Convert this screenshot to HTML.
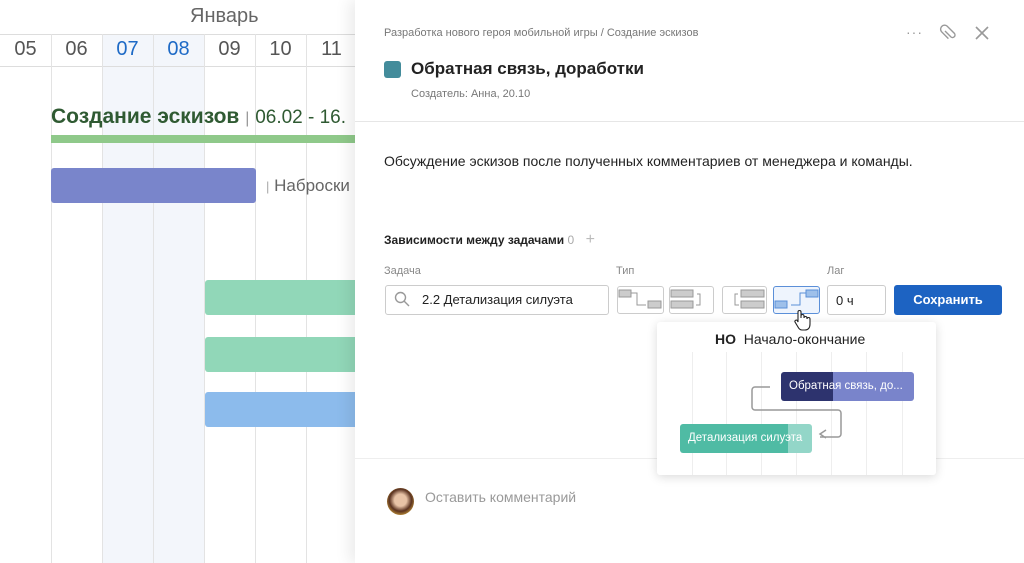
<!DOCTYPE html>
<html><head><meta charset="utf-8"><style>
*{margin:0;padding:0;box-sizing:border-box}
body{width:1024px;height:563px;overflow:hidden;background:#fff;font-family:"Liberation Sans","Noto Sans CJK SC",sans-serif;position:relative}
.a{position:absolute}
.col{position:absolute;top:34px;bottom:0;width:1px;background:#e3e3e3}
.d{position:absolute;top:38px;width:51px;text-align:center;font-size:20px;color:#555}
.tb{position:absolute;top:286px;width:30px;height:28px;border:1px solid #ccc;border-radius:3px;background:#fff}
</style></head><body>
<div class="a" style="left:102px;top:34px;width:102px;height:529px;background:#f3f6fb"></div>
<div class="a" style="left:0;top:34px;width:360px;height:1px;background:#ddd"></div>
<div class="a" style="left:0;top:66px;width:360px;height:1px;background:#ddd"></div>
<div class="col" style="left:51px"></div><div class="col" style="left:102px"></div><div class="col" style="left:153px"></div><div class="col" style="left:204px"></div><div class="col" style="left:255px"></div><div class="col" style="left:306px"></div>
<div class="a" style="left:190px;top:5px;font-size:20px;color:#666">Январь</div>
<div class="d" style="left:0">05</div><div class="d" style="left:51px">06</div><div class="d" style="left:102px;color:#1e6ac6">07</div><div class="d" style="left:153px;color:#1e6ac6">08</div><div class="d" style="left:204px">09</div><div class="d" style="left:255px">10</div><div class="d" style="left:306px">11</div>
<div class="a" style="left:51px;top:105px;font-size:21px;font-weight:bold;color:#2f5a32;white-space:nowrap">Создание эскизов <span style="font-weight:normal;color:#999;font-size:16px">|</span> <span style="font-weight:normal;font-size:19px">06.02 - 16.</span></div>
<div class="a" style="left:51px;top:135px;width:310px;height:8px;background:#8fc98a"></div>
<div class="a" style="left:51px;top:168px;width:205px;height:35px;background:#7985cb;border-radius:3px"></div>
<div class="a" style="left:266px;top:176px;font-size:17px;color:#666;white-space:nowrap"><span style="color:#aaa;font-size:13px">|</span> Наброски</div>
<div class="a" style="left:205px;top:280px;width:160px;height:35px;background:#91d7b8;border-radius:3px"></div>
<div class="a" style="left:205px;top:337px;width:160px;height:35px;background:#91d7b8;border-radius:3px"></div>
<div class="a" style="left:205px;top:392px;width:160px;height:35px;background:#8cbbec;border-radius:3px"></div>

<div class="a" style="left:355px;top:0;width:669px;height:563px;background:#fff;box-shadow:-6px 0 14px rgba(0,0,0,.08)"></div>
<div class="a" style="left:384px;top:27px;font-size:11px;color:#777">Разработка нового героя мобильной игры / Создание эскизов</div>
<div class="a" style="left:906px;top:24px;font-size:14px;color:#999;letter-spacing:1px">···</div>
<svg class="a" style="left:938px;top:22px" width="22" height="22" viewBox="0 0 22 22" fill="none" stroke="#999" stroke-width="1.4"><path d="M7 9l6 6a2.5 2.5 0 0 0 3.5-3.5L9 4a4 4 0 0 0-5.6 5.6l7 7"/></svg>
<svg class="a" style="left:974px;top:25px" width="16" height="16" stroke="#999" stroke-width="1.6"><path d="M2 2l12 12M14 2L2 14"/></svg>
<div class="a" style="left:384px;top:61px;width:17px;height:17px;border-radius:3px;background:#438c9b"></div>
<div class="a" style="left:411px;top:59px;font-size:17px;font-weight:bold;color:#222">Обратная связь, доработки</div>
<div class="a" style="left:411px;top:88px;font-size:11px;color:#777">Создатель: Анна, 20.10</div>
<div class="a" style="left:355px;top:121px;width:669px;height:1px;background:#e6e6e6"></div>
<div class="a" style="left:384px;top:153px;font-size:14px;color:#222">Обсуждение эскизов после полученных комментариев от менеджера и команды.</div>
<div class="a" style="left:384px;top:231px;font-size:12px;font-weight:bold;color:#222">Зависимости между задачами <span style="font-weight:normal;color:#aaa">0</span> <span style="font-weight:normal;color:#bbb;font-size:16px;margin-left:8px">+</span></div>
<div class="a" style="left:384px;top:265px;font-size:11px;color:#888">Задача</div>
<div class="a" style="left:616px;top:265px;font-size:11px;color:#888">Тип</div>
<div class="a" style="left:827px;top:265px;font-size:11px;color:#888">Лаг</div>
<div class="a" style="left:385px;top:285px;width:224px;height:30px;border:1px solid #ccc;border-radius:3px"></div>
<svg class="a" style="left:394px;top:291px" width="16" height="16" fill="none" stroke="#999" stroke-width="1.4"><circle cx="6.5" cy="6.5" r="5"/><path d="M10 10l5 5"/></svg>
<div class="a" style="left:422px;top:292px;font-size:13px;color:#222">2.2 Детализация силуэта</div>
<div class="tb" style="left:617px;width:47px"><svg width="45" height="26"><rect x="1" y="3" width="12" height="7" fill="#ccc" stroke="#999"/><rect x="30" y="14" width="13" height="7" fill="#ccc" stroke="#999"/><path d="M13 6h6v12h9" fill="none" stroke="#999"/></svg></div>
<div class="tb" style="left:669px;width:45px"><svg width="43" height="26"><rect x="1" y="3" width="22" height="7" fill="#ccc" stroke="#999"/><rect x="1" y="14" width="22" height="7" fill="#ccc" stroke="#999"/><path d="M27 7h3v11h-4" fill="none" stroke="#999"/></svg></div>
<div class="tb" style="left:722px;width:45px"><svg width="43" height="26"><rect x="18" y="3" width="23" height="7" fill="#ccc" stroke="#999"/><rect x="18" y="14" width="23" height="7" fill="#ccc" stroke="#999"/><path d="M15 7h-3v11h4" fill="none" stroke="#999"/></svg></div>
<div class="tb" style="left:773px;width:47px;border-color:#5b8fd8;background:#eef4fd"><svg width="45" height="26"><rect x="1" y="14" width="12" height="7" fill="#9ec0ea" stroke="#5b8fd8"/><rect x="32" y="3" width="12" height="7" fill="#9ec0ea" stroke="#5b8fd8"/><path d="M32 6h-6v12h-9" fill="none" stroke="#5b8fd8"/></svg></div>
<div class="a" style="left:827px;top:285px;width:59px;height:30px;border:1px solid #ccc;border-radius:3px;font-size:13px;padding:7px 8px;color:#222">0 ч</div>
<div class="a" style="left:894px;top:285px;width:108px;height:30px;background:#1d63c2;border-radius:3px;color:#fff;font-size:13px;font-weight:bold;text-align:center;line-height:30px">Сохранить</div>
<div class="a" style="left:355px;top:458px;width:669px;height:1px;background:#eee"></div>
<div class="a" style="left:387px;top:488px;width:27px;height:27px;border-radius:50%;background:radial-gradient(circle at 50% 45%,#e8c3a6 30%,#5a3220 55%,#c99a3a 80%)"></div>
<div class="a" style="left:425px;top:489px;font-size:14px;color:#999">Оставить комментарий</div>

<div class="a" style="left:657px;top:322px;width:279px;height:153px;background:#fff;box-shadow:0 2px 10px rgba(0,0,0,.15);border-radius:3px"></div>
<div class="a" style="left:692px;top:330px;width:1px;height:145px;background:#eee"></div><div class="a" style="left:726px;top:330px;width:1px;height:145px;background:#eee"></div><div class="a" style="left:761px;top:330px;width:1px;height:145px;background:#eee"></div><div class="a" style="left:796px;top:330px;width:1px;height:145px;background:#eee"></div><div class="a" style="left:831px;top:330px;width:1px;height:145px;background:#eee"></div><div class="a" style="left:866px;top:330px;width:1px;height:145px;background:#eee"></div><div class="a" style="left:902px;top:330px;width:1px;height:145px;background:#eee"></div>
<div class="a" style="left:657px;top:330px;width:279px;height:22px;background:#fff"></div>
<div class="a" style="left:715px;top:331px;font-size:14px;color:#222;white-space:nowrap"><b>НО</b>&nbsp;&nbsp;Начало-окончание</div>
<div class="a" style="left:781px;top:372px;width:133px;height:29px;border-radius:3px;background:linear-gradient(90deg,#2d336e 0 52px,#7984cb 52px);color:#fff;font-size:11.5px;line-height:29px;padding-left:8px;white-space:nowrap">Обратная связь, до...</div>
<div class="a" style="left:680px;top:424px;width:132px;height:29px;border-radius:3px;background:linear-gradient(90deg,#4fbba4 0 108px,#93d6c8 108px);color:#fff;font-size:11.5px;line-height:29px;padding-left:8px;white-space:nowrap">Детализация силуэта</div>
<svg class="a" style="left:745px;top:385px" width="100" height="60" fill="none" stroke="#999" stroke-width="1.5"><path d="M25 2H10a3 3 0 0 0-3 3v17a3 3 0 0 0 3 3h83a3 3 0 0 1 3 3v21a3 3 0 0 1-3 3H75M81 45l-6 4 6 4"/></svg>
<svg class="a" style="left:793px;top:309px" width="18" height="22"><path d="M5 9V3a1.5 1.5 0 0 1 3 0v6l0-2a1.5 1.5 0 0 1 3 0v2a1.5 1.5 0 0 1 3 0v1a1.5 1.5 0 0 1 3 0v5c0 4-2 6-5 6H9c-2 0-3-1-4-3l-3-5a1.4 1.4 0 0 1 2.3-1.5L5 13z" fill="#fff" stroke="#222" stroke-width="1.1"/></svg>
</body></html>
